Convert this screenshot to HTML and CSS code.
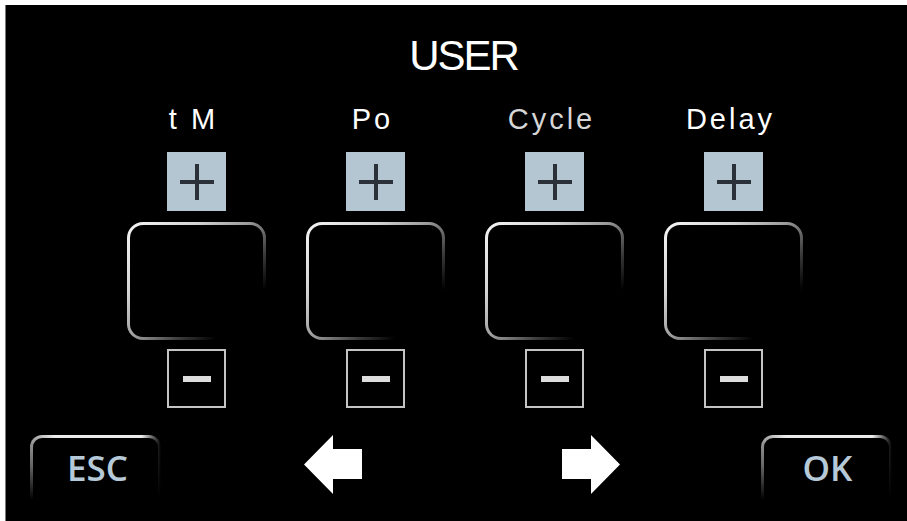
FILE: index.html
```html
<!DOCTYPE html>
<html lang="en">
<head>
    <meta charset="UTF-8">
    <title>USER</title>
    <link rel="stylesheet" href="styles.css">
</head>
<body>
<div class="screen">
    <h1 class="title">USER</h1>
    <div class="params">
        <section class="param">
            <div class="param-name">t M</div>
            <button class="btn-plus"><svg width="34" height="36" viewBox="0 0 34 36"><path d="M0 18H34M17 0V36" stroke="#2b3139" stroke-width="4"/></svg></button>
            <div class="value-box"><div class="value-inner"></div></div>
            <button class="btn-minus"><span class="bar"></span></button>
        </section>
        <section class="param">
            <div class="param-name">Po</div>
            <button class="btn-plus"><svg width="34" height="36" viewBox="0 0 34 36"><path d="M0 18H34M17 0V36" stroke="#2b3139" stroke-width="4"/></svg></button>
            <div class="value-box"><div class="value-inner"></div></div>
            <button class="btn-minus"><span class="bar"></span></button>
        </section>
        <section class="param">
            <div class="param-name dim">Cycle</div>
            <button class="btn-plus"><svg width="34" height="36" viewBox="0 0 34 36"><path d="M0 18H34M17 0V36" stroke="#2b3139" stroke-width="4"/></svg></button>
            <div class="value-box"><div class="value-inner"></div></div>
            <button class="btn-minus"><span class="bar"></span></button>
        </section>
        <section class="param">
            <div class="param-name">Delay</div>
            <button class="btn-plus"><svg width="34" height="36" viewBox="0 0 34 36"><path d="M0 18H34M17 0V36" stroke="#2b3139" stroke-width="4"/></svg></button>
            <div class="value-box"><div class="value-inner"></div></div>
            <button class="btn-minus"><span class="bar"></span></button>
        </section>
    </div>
    <div class="footer">
        <button class="key key-esc"><span class="key-inner">ESC</span></button>
        <button class="arrow arrow-left"><svg width="58" height="59" viewBox="0 0 58 59"><polygon points="0,29.5 29,0 29,14 58,14 58,44 29,44 29,59" fill="#fff"/></svg></button>
        <button class="arrow arrow-right"><svg width="58" height="59" viewBox="0 0 58 59"><polygon points="0,14 29,14 29,0 58,29.5 29,59 29,44 0,44" fill="#fff"/></svg></button>
        <button class="key key-ok"><span class="key-inner">OK</span></button>
    </div>
</div>
</body>
</html>
```

FILE: styles.css
```css
*{
    margin: 0;
    padding: 0;
    box-sizing: border-box;
}
html, body{
    width: 907px;
    height: 521px;
    overflow: hidden;
}
body{
    background: #ffffff;
    font-family: "Liberation Sans", Arial, sans-serif;
}
button{
    border: none;
    background: none;
    outline: none;
    font: inherit;
    color: inherit;
}
.screen{
    margin: 5px 0 0 5px;
    height: 516px;
    border-left: 1px solid #7a7a7a;
    background: #000000;
    color: #ffffff;
    overflow: hidden;
}
.title{
    padding: 30px 0 0 14px;
    height: 72px;
    font-size: 42px;
    line-height: 42px;
    font-weight: normal;
    letter-spacing: -2px;
    text-align: center;
}
.params{
    display: grid;
    grid-template-columns: repeat(4, 179px);
    padding-left: 101px;
    margin-top: 28px;
}
.param{
    display: flex;
    flex-direction: column;
    align-items: center;
}
.param-name{
    height: 28px;
    font-size: 29px;
    line-height: 28px;
    letter-spacing: 3px;
    margin-right: 6px;
    color: #ffffff;
}
.param-name.dim{
    color: #d6d6d6;
}
.btn-plus{
    width: 59px;
    height: 59px;
    margin-top: 19px;
    background: #b5c6d3;
    display: flex;
    align-items: center;
    justify-content: center;
}
.btn-plus svg{
    display: block;
}
.value-box{
    width: 139px;
    height: 118px;
    margin-top: 11px;
    padding: 3px;
    border-radius: 16px;
    background: linear-gradient(135deg, #f6f6f6 0%, #d4d4d4 28%, #9a9a9a 48%, #3a3a3a 66%, #000000 80%);
}
.value-inner{
    width: 100%;
    height: 100%;
    border-radius: 13px;
    background: #000000;
}
.btn-minus{
    width: 59px;
    height: 59px;
    margin-top: 9px;
    border: 2px solid #c4c4c4;
    display: flex;
    align-items: center;
    justify-content: center;
}
.btn-minus .bar{
    width: 28px;
    height: 6px;
    background: #dddddd;
}
.footer{
    display: flex;
    align-items: flex-start;
    margin-top: 27px;
}
.key{
    width: 131px;
    height: 110px;
    padding: 3px;
    border-radius: 12px;
    background:
        linear-gradient(to right, rgba(0,0,0,0.35) 0, rgba(0,0,0,0) 25px),
        linear-gradient(to right, rgba(0,0,0,0) 85%, #000000 100%),
        linear-gradient(to bottom, #f0f0f0 0, #9a9a9a 30px, #000000 65px);
}
.key-inner{
    display: block;
    height: 100%;
    border-radius: 9px;
    background: #000000;
    padding-top: 10px;
    font-family: "Open Sans", sans-serif;
    font-weight: 600;
    font-size: 35px;
    line-height: 40px;
    color: #b6c9d8;
    text-align: center;
}
.key-esc{
    margin-left: 24px;
}
.key-esc .key-inner{
    padding-left: 4px;
}
.key-ok{
    margin-left: 141px;
}
.key-ok .key-inner{
    padding-left: 2px;
}
.arrow{
    width: 58px;
    height: 59px;
}
.arrow svg{
    display: block;
}
.arrow-left{
    margin-left: 143px;
}
.arrow-right{
    margin-left: 200px;
}
```
